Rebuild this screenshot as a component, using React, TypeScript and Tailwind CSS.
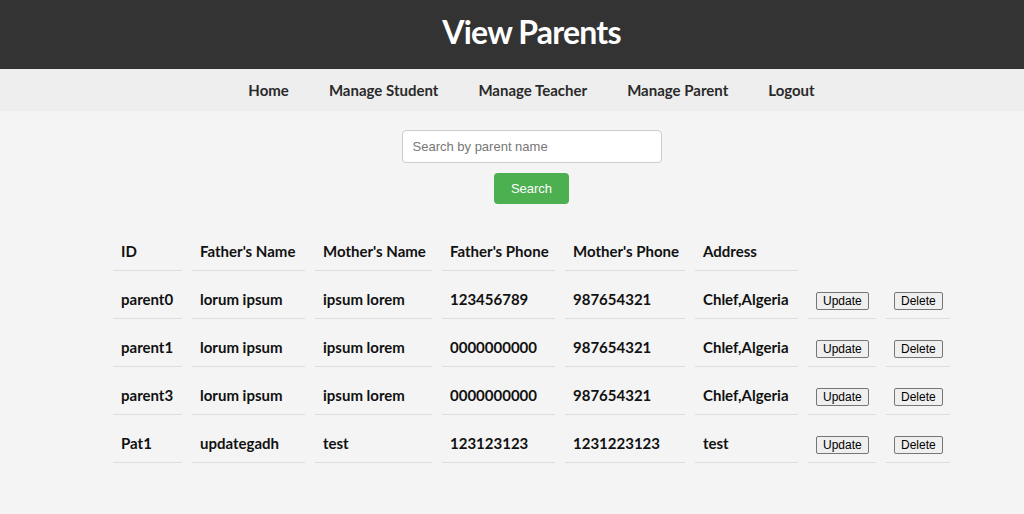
const parents = [
  { id: "parent0", father: "lorum ipsum", mother: "ipsum lorem", fPhone: "123456789", mPhone: "987654321", address: "Chlef,Algeria" },
  { id: "parent1", father: "lorum ipsum", mother: "ipsum lorem", fPhone: "0000000000", mPhone: "987654321", address: "Chlef,Algeria" },
  { id: "parent3", father: "lorum ipsum", mother: "ipsum lorem", fPhone: "0000000000", mPhone: "987654321", address: "Chlef,Algeria" },
  { id: "Pat1", father: "updategadh", mother: "test", fPhone: "123123123", mPhone: "1231223123", address: "test" },
];

const navLinks = ["Home", "Manage Student", "Manage Teacher", "Manage Parent", "Logout"];

const headings = ["ID", "Father's Name", "Mother's Name", "Father's Phone", "Mother's Phone", "Address"];

const cell = "px-2 h-[38px] border-b border-[#ddd] text-left align-middle whitespace-nowrap";

const ActionButton = ({ label }: { label: string }) => (
  <button className="bg-[#efefef] border border-[#767676] rounded-[2px] px-[6px] h-[18px] leading-none text-[12px] text-black font-['Liberation_Sans',Arial,sans-serif] font-normal">
    {label}
  </button>
);

export default function App() {
  return (
    <div className="min-h-screen bg-[#f4f4f4] font-['Lato','Noto_Sans',sans-serif] text-[#111]">
      <header className="h-[69px] bg-[#333] flex items-center justify-center pl-[39px] pb-[6px]">
        <h1 className="text-white text-[32px] font-bold tracking-tight">View Parents</h1>
      </header>

      <nav className="h-[42px] bg-[#eee] flex items-center justify-center gap-10 pl-[39px]">
        {navLinks.map((link) => (
          <a key={link} href="#" className="text-[15px] font-bold text-[#2a2a2a]">
            {link}
          </a>
        ))}
      </nav>

      <main className="pl-[39px]">
        <div className="flex flex-col items-center pt-[19px] font-['Liberation_Sans',Arial,sans-serif]">
          <input
            type="text"
            placeholder="Search by parent name"
            className="w-[260px] h-[33px] bg-white border border-[#ccc] rounded px-[10px] text-[13px] placeholder:text-[#777] outline-none"
          />
          <button className="mt-[10px] w-[75px] h-[31px] bg-[#4caf50] text-white text-[13px] rounded">
            Search
          </button>
        </div>

        <table className="table-fixed w-[857px] mx-auto mt-[19px] border-separate border-spacing-[10px] text-[15px] font-bold">
          <colgroup>
            <col className="w-[69px]" />
            <col className="w-[113px]" />
            <col className="w-[117px]" />
            <col className="w-[113px]" />
            <col className="w-[120px]" />
            <col className="w-[103px]" />
            <col className="w-[68px]" />
            <col className="w-[64px]" />
          </colgroup>
          <thead>
            <tr>
              {headings.map((h) => (
                <th key={h} className={cell + " font-bold"}>
                  {h}
                </th>
              ))}
            </tr>
          </thead>
          <tbody>
            {parents.map((p) => (
              <tr key={p.id}>
                <td className={cell}>{p.id}</td>
                <td className={cell}>{p.father}</td>
                <td className={cell}>{p.mother}</td>
                <td className={cell}>{p.fPhone}</td>
                <td className={cell}>{p.mPhone}</td>
                <td className={cell}>{p.address}</td>
                <td className={cell}>
                  <ActionButton label="Update" />
                </td>
                <td className={cell}>
                  <ActionButton label="Delete" />
                </td>
              </tr>
            ))}
          </tbody>
        </table>
      </main>
    </div>
  );
}
